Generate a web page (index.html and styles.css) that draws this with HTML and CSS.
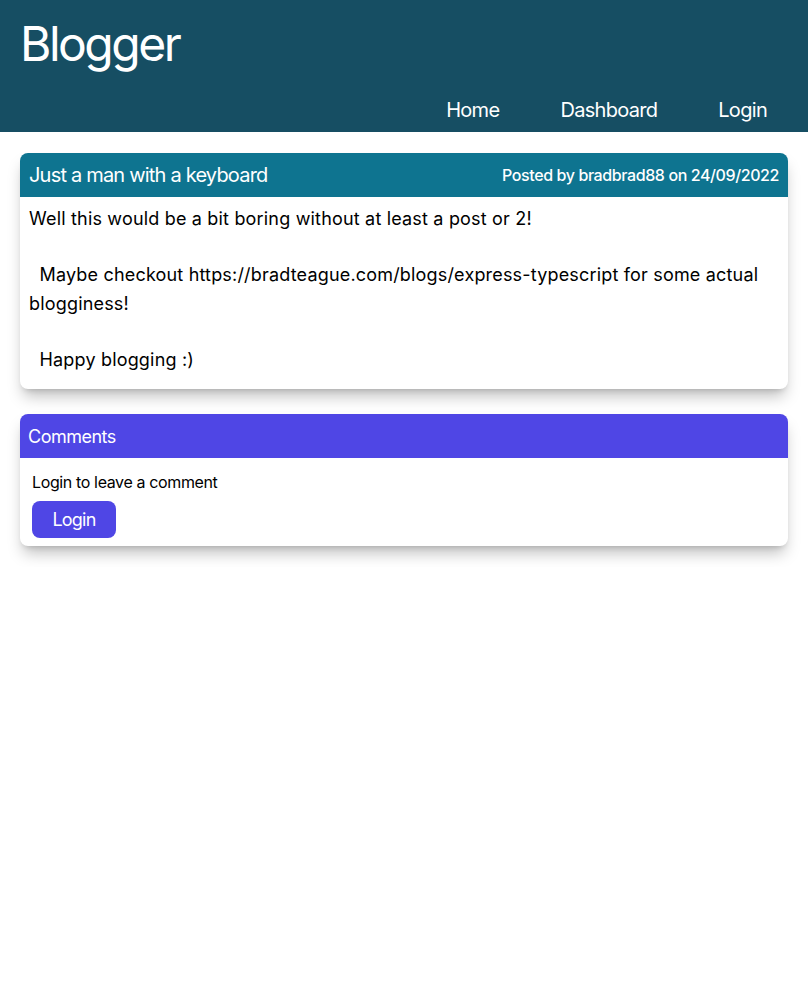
FILE: index.html
```html
<!DOCTYPE html>
<html lang="en">
<head>
<meta charset="utf-8">
<title>Blogger</title>
<link rel="stylesheet" href="styles.css">
</head>
<body>
<header class="site-header">
  <h1 class="brand">Blogger</h1>
  <nav class="nav">
    <a href="#">Home</a>
    <a href="#">Dashboard</a>
    <a href="#">Login</a>
  </nav>
</header>
<main class="content">
  <article class="card post">
    <div class="card-head post-head">
      <h2 class="post-title">Just a man with a keyboard</h2>
      <span class="post-meta">Posted by bradbrad88 on 24/09/2022</span>
    </div>
    <div class="post-body">Well this would be a bit boring without at least a post or 2!

  Maybe checkout https://bradteague.com/blogs/express-typescript for some actual blogginess!

  Happy blogging :)</div>
  </article>
  <section class="card comments">
    <div class="card-head comments-head">Comments</div>
    <div class="comments-body">
      <p class="login-hint">Login to leave a comment</p>
      <button class="btn">Login</button>
    </div>
  </section>
</main>
</body>
</html>
```
FILE: styles.css
```css
* { box-sizing: border-box; }
html, body { margin: 0; padding: 0; }
body {
  font-family: Inter, "Noto Sans", sans-serif;
  color: #000;
  background: #fff;
}
.site-header {
  background: #164e63;
  color: #fff;
  padding: 20px 41px 8px 20px;
}
.brand {
  margin: 0;
  font-size: 48px;
  line-height: 48px;
  font-weight: 400;
  letter-spacing: -2.5px;
}
.nav {
  display: flex;
  justify-content: flex-end;
  gap: 61px;
  margin-top: 28px;
}
.nav a {
  color: #fff;
  text-decoration: none;
  font-size: 20px;
  line-height: 28px;
  letter-spacing: -0.7px;
}
.content {
  padding: 21px 20px;
  display: flex;
  flex-direction: column;
  gap: 25px;
}
.card {
  background: #fff;
  border-radius: 8px;
  overflow: hidden;
  box-shadow: 0 10px 15px -3px rgba(0,0,0,0.25), 0 4px 6px -4px rgba(0,0,0,0.2);
}
.card-head {
  height: 44px;
  display: flex;
  align-items: center;
  color: #fff;
}
.post-head {
  background: #0e7490;
  justify-content: space-between;
  padding: 0 9px;
}
.post-title {
  margin: 0;
  font-size: 20px;
  font-weight: 400;
  line-height: 28px;
  letter-spacing: -0.8px;
}
.post-meta {
  font-size: 16px;
  font-weight: 500;
  letter-spacing: -0.4px;
}
.post-body {
  white-space: pre-wrap;
  font-size: 18px;
  line-height: 28.2px;
  padding: 8px 9px 15px;
  letter-spacing: 0.18px;
}
.comments-head {
  background: #4f46e5;
  font-size: 18px;
  padding: 0 8px;
  letter-spacing: -0.5px;
}
.comments-body {
  padding: 12px 12px 8px;
}
.login-hint {
  margin: 0 0 7px;
  font-size: 16px;
  line-height: 24px;
  letter-spacing: -0.37px;
}
.btn {
  font-family: inherit;
  background: #4f46e5;
  color: #fff;
  border: 0;
  border-radius: 8px;
  font-size: 18px;
  height: 37px;
  width: 84px;
  padding: 0;
  cursor: pointer;
  letter-spacing: -0.8px;
}
```
